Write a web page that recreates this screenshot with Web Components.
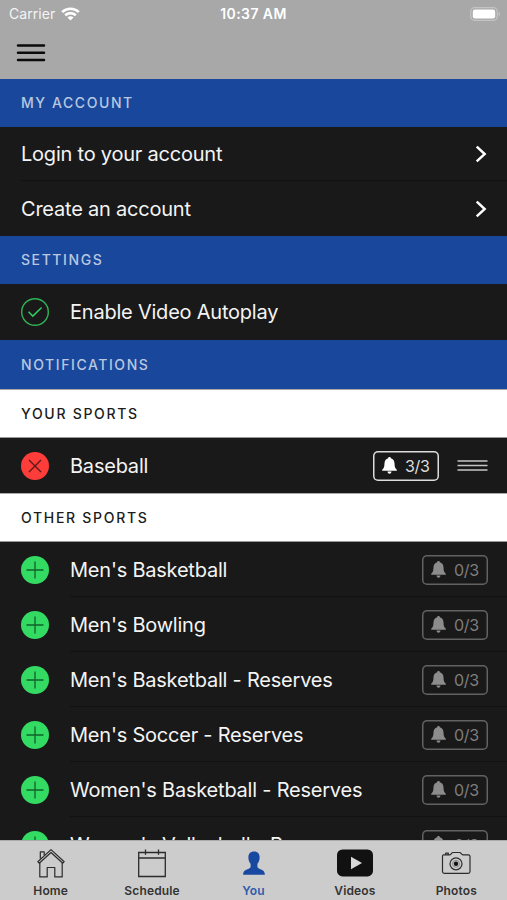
<!DOCTYPE html>
<html lang="en">
<head>
  <meta charset="utf-8">
  <title>You</title>
  <style>
    body {
      margin: 0;
      background: #191919;
      font-family: Inter, "Liberation Sans", sans-serif;
    }
  </style>
</head>
<body>
  <account-screen></account-screen>

  <script>
    // Attaches an open shadow root filled from an html string
    function render(element, html) {
      const template = document.createElement('template');
      template.innerHTML = html;
      element.attachShadow({ mode: 'open' });
      element.shadowRoot.appendChild(template.content.cloneNode(true));
    }

    class StatusBar extends HTMLElement {
      constructor() {
        super();
        render(this, `
          <style>
            :host {
              display: grid;
              grid-template-columns: 1fr auto 1fr;
              align-items: center;
              height: 27px;
              padding: 0 6px 0 9px;
              color: #fff;
              font-size: 14px;
            }
            .carrier {
              display: flex;
              align-items: center;
              gap: 6px;
              color: #f4f4f4;
              letter-spacing: 0.05px;
            }
            .time {
              font-weight: 600;
              font-size: 14px;
              letter-spacing: 0.4px;
              margin-right: 3px;
            }
            svg { display: block; }
            .battery { justify-self: end; }
          </style>
          <div class="carrier">
            <span>Carrier</span>
            <svg width="19" height="14" viewBox="0 0 19 14" fill="none" stroke="#fff" stroke-width="2.7">
              <path d="M1.2 5.1C5.8 .6 13.2 .6 17.8 5.1"/>
              <path d="M4.2 8.3c3-2.9 7.6-2.9 10.6 0"/>
              <path d="M9.5 13.6l-3-3.2c1.7-1.6 4.3-1.6 6 0z" fill="#fff" stroke="none"/>
            </svg>
          </div>
          <span class="time">10:37 AM</span>
          <svg class="battery" width="31" height="14" viewBox="0 0 31 14">
            <rect x=".7" y=".7" width="26.6" height="12.6" rx="4" fill="none" stroke="#c4c4c4" stroke-width="1.3"/>
            <rect x="2.8" y="2.6" width="22.4" height="8.8" rx="2.2" fill="#fff"/>
            <path d="M28.7 5v4c2-.7 2-3.3 0-4z" fill="#c4c4c4"/>
          </svg>
        `);
      }
    }

    class NavBar extends HTMLElement {
      constructor() {
        super();
        render(this, `
          <style>
            :host {
              display: flex;
              align-items: center;
              height: 52px;
              padding-left: 16px;
            }
            svg { display: block; }
          </style>
          <svg width="30" height="20" viewBox="0 0 30 20" stroke="#0a0a0a" stroke-width="2.5" stroke-linecap="round">
            <path d="M2 2.6h26M2 9.7h26M2 17h26"/>
          </svg>
        `);
      }
    }

    class SectionHeader extends HTMLElement {
      constructor() {
        super();
        render(this, `
          <style>
            :host {
              display: flex;
              align-items: center;
              box-sizing: border-box;
              height: 49px;
              padding-left: 21px;
              background: #18479b;
              color: #b9c7e0;
              font-size: 14px;
              font-weight: 500;
              letter-spacing: 1.58px;
              white-space: nowrap;
            }
            :host([light]) {
              background: #fff;
              color: #1c1c1c;
              letter-spacing: 1.7px;
              border-top: 1px solid #aaa;
              border-bottom: 1px solid #999;
            }
          </style>
          <slot></slot>
        `);
      }
    }

    class ListRow extends HTMLElement {
      constructor() {
        super();
        render(this, `
          <style>
            :host {
              display: flex;
              box-sizing: border-box;
              height: 55px;
              padding-left: 21px;
              background: #191919;
              color: #f4f4f4;
              font-size: 20px;
              letter-spacing: -0.22px;
            }
            .icon { display: flex; align-items: center; }
            ::slotted([slot="icon"]) { margin-right: 21px; }
            .main {
              flex: 1;
              display: flex;
              align-items: center;
              padding-right: 19px;
              white-space: nowrap;
            }
            :host([divider]) .main { box-shadow: inset 0 -1px #111; }
            .label { flex: 1; }
          </style>
          <div class="icon"><slot name="icon"></slot></div>
          <div class="main">
            <span class="label"><slot></slot></span>
            <slot name="end"></slot>
          </div>
        `);
      }
    }

    class RowChevron extends HTMLElement {
      constructor() {
        super();
        render(this, `
          <style>
            :host { display: block; }
            svg { display: block; }
          </style>
          <svg width="14" height="18" viewBox="0 0 14 18" fill="none" stroke="#fff" stroke-width="2.4" stroke-linecap="square">
            <path d="M3.6 2.4L10.7 9l-7.1 6.6"/>
          </svg>
        `);
      }
    }

    const CIRCLES = {
      check: `
        <circle cx="14" cy="14" r="13.3" fill="none" stroke="#2fb457" stroke-width="1.4"/>
        <path d="M7.5 13.8l4.3 4.3 8.8-8.6" fill="none" stroke="#34c961" stroke-width="1.5"/>`,
      remove: `
        <circle cx="14" cy="14" r="14" fill="#fc3d3a"/>
        <path d="M8 8l12 12M20 8L8 20" stroke="#5a1715" stroke-width="1.3"/>`,
      add: `
        <circle cx="14" cy="14" r="14" fill="#33db63"/>
        <path d="M14 5.5v17M5.5 14h17" stroke="#12612a" stroke-width="1.3"/>`
    };

    class CircleIcon extends HTMLElement {
      constructor() {
        super();
        render(this, `
          <style>
            :host { display: block; width: 28px; height: 28px; }
            svg { display: block; }
          </style>
          <svg width="28" height="28" viewBox="0 0 28 28">${CIRCLES[this.getAttribute('type')]}</svg>
        `);
      }
    }

    class AlertBadge extends HTMLElement {
      constructor() {
        super();
        render(this, `
          <style>
            :host {
              display: flex;
              align-items: center;
              gap: 8px;
              box-sizing: border-box;
              width: 66px;
              height: 30px;
              padding-left: 9px;
              border-radius: 5px;
              box-shadow: inset 0 0 0 1.5px #626262;
              color: #7e7e7e;
              font-size: 16px;
              letter-spacing: -0.3px;
            }
            :host([active]) {
              box-shadow: inset 0 0 0 1.5px #ddd;
              color: #ddd;
            }
            svg { display: block; flex: none; fill: #8c8c8c; }
            :host([active]) svg { fill: #fff; }
          </style>
          <svg width="15" height="17" viewBox="0 0 15 17">
            <path d="M7.5 0c.8 0 1.3.5 1.3 1.3 2.4.6 3.6 2.4 3.7 5 .1 3.500.5 5 2.3 6.5v1H.2v-1c1.8-1.5 2.2-3 2.3-6.5.1-2.6 1.3-4.4 3.7-5C6.2.5 6.7 0 7.5 0z"/>
            <path d="M5.5 14.6h4c-.2 2.9-3.8 2.9-4 0z"/>
          </svg>
          <span><slot></slot></span>
        `);
      }
    }

    class DragHandle extends HTMLElement {
      constructor() {
        super();
        render(this, `
          <style>
            :host { display: block; margin-left: 18px; }
            svg { display: block; }
          </style>
          <svg width="31" height="13" viewBox="0 0 31 13" stroke="#c6c6c6" stroke-width="1.6">
            <path d="M.5 2h30M.5 6.5h30M.5 11h30"/>
          </svg>
        `);
      }
    }

    const TAB_ICONS = {
      home: `
        <g fill="none" stroke="#2b2b2b" stroke-width="1.2" stroke-linejoin="round">
          <path d="M4.8 14.7L18 2.6l13.2 12.1-1.4 1.5L18 5.5 6.2 16.200z"/>
          <path d="M7.3 11.8V4.900h3.900v3.400M6.800 16v13.900h7.400V20.500h7.600v9.400h7.400V16"/>
        </g>`,
      schedule: `
        <path d="M4.7 5.5h26.6v24H4.7zM4.7 11h26.6M11.5 2.500v5.300M24.5 2.500v5.300" fill="none" stroke="#2b2b2b" stroke-width="1.3"/>`,
      you: `
        <path d="M18 4.400c4 0 5.800 2.500 5.600 6.300-.1 3-1 4.600-2.200 6.100v3.500c1.700 2.500 7.300 1.500 7.500 7.400H7.100c.2-5.900 5.800-4.900 7.500-7.400v-3.500c-1.200-1.500-2.100-3.100-2.200-6.100-.2-3.800 1.600-6.300 5.600-6.300z" fill="#18489f"/>`,
      videos: `
        <rect x="0" y="2.400" width="36" height="27" rx="5.500" fill="#111"/>
        <path d="M14 9.700l11 6.300-11 6.300z" fill="#d8d8d8"/>`,
      photos: `
        <g fill="none" stroke="#2b2b2b" stroke-width="1.200" stroke-linejoin="round">
          <path d="M5.500 7.800h6.300c1.700 0 1.500-2.300 3.200-2.300h6.500c1.700 0 1.800 2.300 3.500 2.300h5.200c1.100 0 1.800.7 1.800 1.800v14.900c0 1.100-.7 1.800-1.800 1.800H6.300c-1.100 0-1.800-.7-1.800-1.800V9.300c0-.8.300-1.200 1-1.500zM7.700 7.500V6.100h2.600v1.400"/>
          <circle cx="18" cy="16.800" r="6"/>
        </g>
        <circle cx="18" cy="16.800" r="3.500" fill="none" stroke="#777" stroke-width=".8"/>
        <circle cx="18" cy="16.800" r="2.200" fill="#111"/>`
    };

    class TabItem extends HTMLElement {
      constructor() {
        super();
        render(this, `
          <style>
            :host {
              flex: 1;
              display: flex;
              flex-direction: column;
              align-items: center;
              gap: 3px;
              padding-top: 6px;
              color: #333;
              font-size: 12px;
              font-weight: 600;
              line-height: 17px;
              letter-spacing: 0.15px;
            }
            :host([selected]) { color: #2c5cab; }
            svg { display: block; }
          </style>
          <svg width="36" height="32" viewBox="0 0 36 32">${TAB_ICONS[this.getAttribute('icon')]}</svg>
          <span><slot></slot></span>
        `);
      }
    }

    class TabBar extends HTMLElement {
      constructor() {
        super();
        render(this, `
          <style>
            :host {
              display: flex;
              flex: none;
              box-sizing: border-box;
              height: 60px;
              background: #ccc;
              border-top: 1px solid #aaa;
            }
          </style>
          <slot></slot>
        `);
      }
    }

    class AccountScreen extends HTMLElement {
      constructor() {
        super();
        const others = [
          "Men's Basketball",
          "Men's Bowling",
          "Men's Basketball - Reserves",
          "Men's Soccer - Reserves",
          "Women's Basketball - Reserves",
          "Women's Volleyball - Reserves"
        ];

        render(this, `
          <style>
            :host {
              display: flex;
              flex-direction: column;
              width: 507px;
              height: 900px;
              overflow: hidden;
            }
            header { flex: none; background: #a8a8a8; }
            main { flex: 1; min-height: 0; overflow: hidden; }
            .account, .settings { height: 48px; padding-bottom: 2px; }
            .link { height: 54px; }
            .autoplay { height: 56px; }
          </style>
          <header>
            <status-bar></status-bar>
            <nav-bar></nav-bar>
          </header>
          <main>
            <section-header class="account">MY ACCOUNT</section-header>
            <list-row class="link" divider>Login to your account<row-chevron slot="end"></row-chevron></list-row>
            <list-row>Create an account<row-chevron slot="end"></row-chevron></list-row>
            <section-header class="settings">SETTINGS</section-header>
            <list-row class="autoplay"><circle-icon slot="icon" type="check"></circle-icon>Enable Video Autoplay</list-row>
            <section-header>NOTIFICATIONS</section-header>
            <section-header light>YOUR SPORTS</section-header>
            <list-row>
              <circle-icon slot="icon" type="remove"></circle-icon>Baseball
              <alert-badge slot="end" active>3/3</alert-badge>
              <drag-handle slot="end"></drag-handle>
            </list-row>
            <section-header light>OTHER SPORTS</section-header>
            ${others.map(name => `
              <list-row divider>
                <circle-icon slot="icon" type="add"></circle-icon>${name}
                <alert-badge slot="end">0/3</alert-badge>
              </list-row>`).join('')}
          </main>
          <tab-bar>
            <tab-item icon="home">Home</tab-item>
            <tab-item icon="schedule">Schedule</tab-item>
            <tab-item icon="you" selected>You</tab-item>
            <tab-item icon="videos">Videos</tab-item>
            <tab-item icon="photos">Photos</tab-item>
          </tab-bar>
        `);
      }
    }

    customElements.define('status-bar', StatusBar);
    customElements.define('nav-bar', NavBar);
    customElements.define('section-header', SectionHeader);
    customElements.define('list-row', ListRow);
    customElements.define('row-chevron', RowChevron);
    customElements.define('circle-icon', CircleIcon);
    customElements.define('alert-badge', AlertBadge);
    customElements.define('drag-handle', DragHandle);
    customElements.define('tab-item', TabItem);
    customElements.define('tab-bar', TabBar);
    customElements.define('account-screen', AccountScreen);
  </script>
</body>
</html>
